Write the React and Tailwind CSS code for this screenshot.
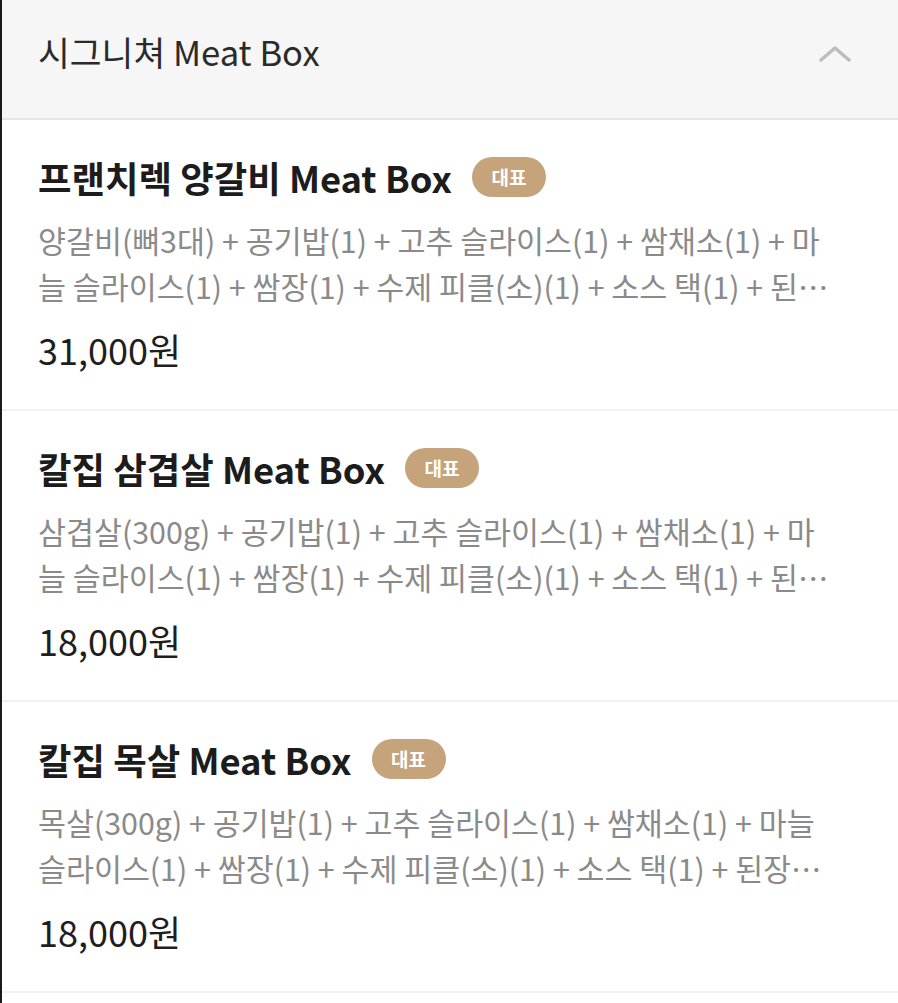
import React from "react";

const items = [
  {
    name: "프랜치렉 양갈비 Meat Box",
    desc: "양갈비(뼈3대) + 공기밥(1) + 고추 슬라이스(1) + 쌈채소(1) + 마늘 슬라이스(1) + 쌈장(1) + 수제 피클(소)(1) + 소스 택(1) + 된장찌개(1)",
    price: "31,000원",
  },
  {
    name: "칼집 삼겹살 Meat Box",
    desc: "삼겹살(300g) + 공기밥(1) + 고추 슬라이스(1) + 쌈채소(1) + 마늘 슬라이스(1) + 쌈장(1) + 수제 피클(소)(1) + 소스 택(1) + 된장찌개(1)",
    price: "18,000원",
  },
  {
    name: "칼집 목살 Meat Box",
    desc: "목살(300g) + 공기밥(1) + 고추 슬라이스(1) + 쌈채소(1) + 마늘 슬라이스(1) + 쌈장(1) + 수제 피클(소)(1) + 소스 택(1) + 된장찌개(1)",
    price: "18,000원",
  },
];

export default function App() {
  return (
    <div
      className="w-[898px] h-[1003px] bg-white border-l-2 border-[#1a1a1a] overflow-hidden"
      style={{ fontFamily: '"Noto Sans CJK KR", "Noto Sans", sans-serif' }}
    >
      <div className="h-[120px] bg-[#f6f6f6] border-b-2 border-[#e6e6e6] flex items-center justify-between pl-[36px] pr-[46px] pb-[14px]">
        <span className="text-[34.6px] text-[#2a2a2a]">시그니쳐 Meat Box</span>
        <svg width="34" height="20" viewBox="0 0 34 20" fill="none" className="mt-[4px]">
          <path d="M3 16 L17 4 L31 16" stroke="#bdbdbd" strokeWidth="3.5" strokeLinecap="round" strokeLinejoin="round" />
        </svg>
      </div>
      {items.map((it, i) => (
        <div key={i} className="h-[291px] border-b-2 border-[#f1f1f1] pl-[36px] pr-[58px] pt-[34px]">
          <div className="flex items-center gap-[20px] h-[46px]">
            <span className="text-[36.4px] font-bold text-[#1c1c1c]">{it.name}</span>
            <span className="h-[40px] w-[74px] rounded-full bg-[#c5a47c] text-white text-[19px] font-bold flex items-center justify-center">
              대표
            </span>
          </div>
          <p className="mt-[17px] text-[30.4px] leading-[46px] text-[#8a8a8a] line-clamp-2 break-all">
            {it.desc}
          </p>
          <div className="mt-[18px] text-[36px] leading-[44px] text-[#1e1e1e]">{it.price}</div>
        </div>
      ))}
    </div>
  );
}
